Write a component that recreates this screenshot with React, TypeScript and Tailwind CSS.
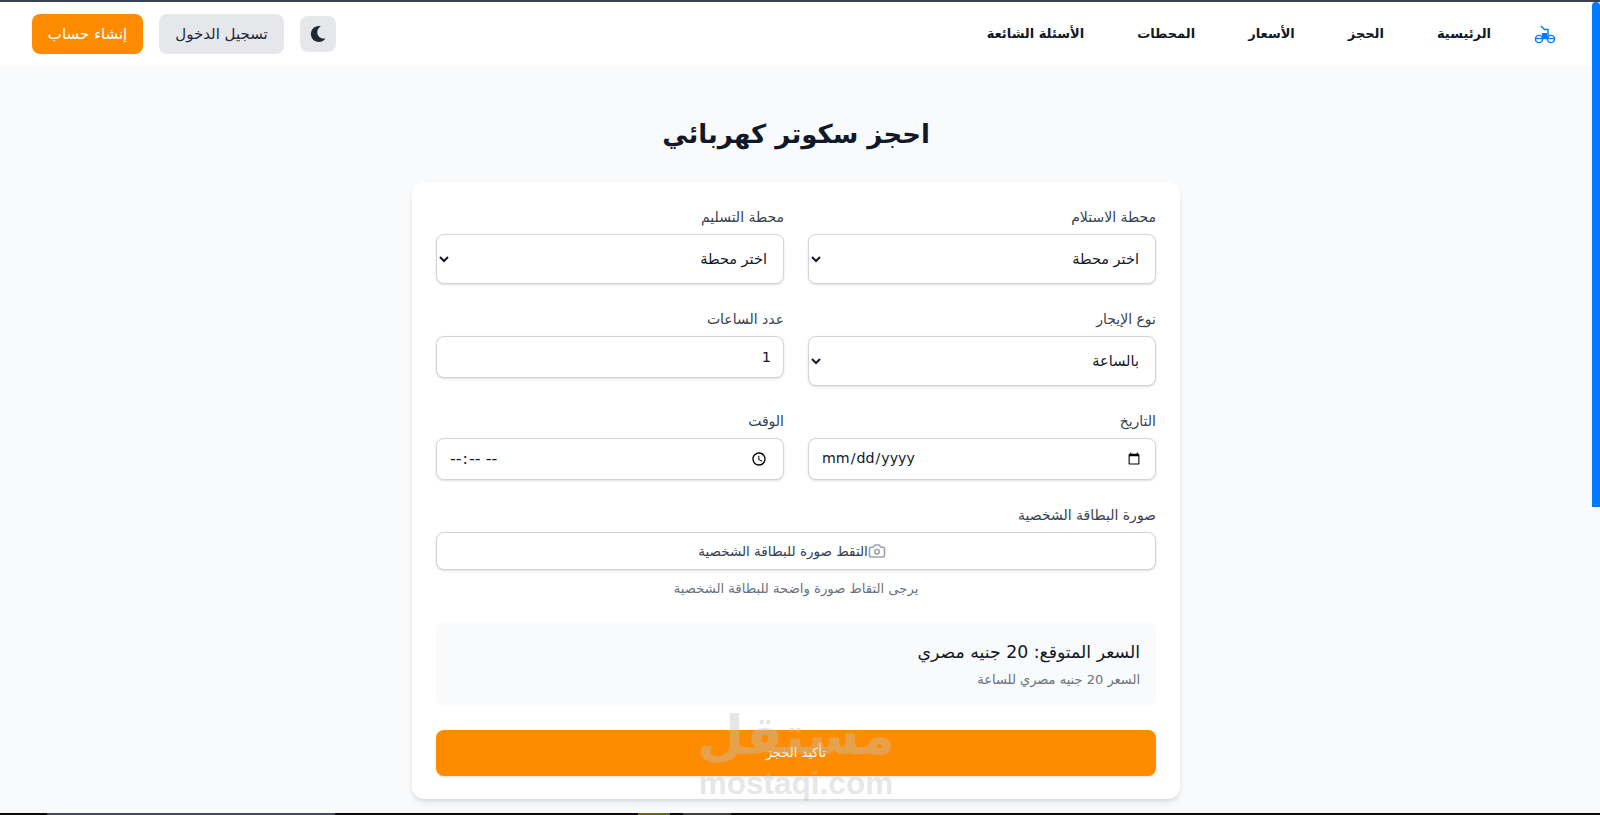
import { Camera } from "lucide-react";
import { FaMoon } from "react-icons/fa";

const field = "w-full rounded-lg border border-[#d1d5db] bg-white shadow-sm text-[#111827]";

function Logo() {
  return (
    <svg width="22" height="19" viewBox="0 0 22 19" fill="none" stroke="#007bff" strokeWidth="1.4">
      <circle cx="5" cy="14" r="3.6" />
      <circle cx="17" cy="14" r="3.6" />
      <path d="M1.5 13.5h19" />
      <path d="M7 1l3.5 3.5h3.5v8" />
      <rect x="8" y="8" width="5" height="5" fill="#007bff" stroke="none" />
    </svg>
  );
}

function Label({ children }: { children: string }) {
  return <label className="block mt-px text-[14px] leading-5 text-[#374151] mb-[7px]">{children}</label>;
}

function StationSelect({ text }: { text: string }) {
  return (
    <select className={`${field} h-[50px] px-3 text-[14.5px]`}>
      <option>{text}</option>
    </select>
  );
}

export default function App() {
  return (
    <div dir="rtl" className="relative h-screen overflow-hidden flex flex-col bg-[#f9fafb] font-['DejaVu_Sans',sans-serif] text-[#111827]">
      <div className="h-[2px] shrink-0 bg-[#374151]" />
      <header className="h-16 shrink-0 bg-white flex items-center justify-between pr-[36px] pl-8 mr-2">
        <div className="flex items-center gap-[43px]">
          <Logo />
          <nav className="flex items-center gap-[53px] text-[13px] font-bold text-[#111827]">
            <a>الرئيسية</a>
            <a>الحجز</a>
            <a>الأسعار</a>
            <a>المحطات</a>
            <a>الأسئلة الشائعة</a>
          </nav>
        </div>
        <div className="flex items-center gap-4">
          <button className="w-9 h-9 rounded-lg bg-[#e5e7eb] flex items-center justify-center text-[#1f2937]">
            <FaMoon size={16} />
          </button>
          <button className="h-10 w-[125px] rounded-lg bg-[#e5e7eb] text-[15px] text-[#1f2937]">تسجيل الدخول</button>
          <button className="h-10 w-[111px] rounded-lg bg-[#ff8c00] text-[15px] text-white">إنشاء حساب</button>
        </div>
      </header>

      <main className="flex-1 min-h-0 flex flex-col items-center mr-2">
        <h1 className="mt-[48px] mb-[28px] text-[26px] leading-10 font-bold text-[#111827]">احجز سكوتر كهربائي</h1>
        <div className="w-[768px] h-[617px] shrink-0 rounded-xl bg-white shadow-md p-6">
          <div className="grid grid-cols-2 gap-x-6">
            <div className="h-[102px]">
              <Label>محطة الاستلام</Label>
              <StationSelect text="اختر محطة" />
            </div>
            <div className="h-[102px]">
              <Label>محطة التسليم</Label>
              <StationSelect text="اختر محطة" />
            </div>
            <div className="h-[102px]">
              <Label>نوع الإيجار</Label>
              <StationSelect text="بالساعة" />
            </div>
            <div className="h-[102px]">
              <Label>عدد الساعات</Label>
              <input type="number" defaultValue={1} className={`${field} h-[42px] px-3 text-right text-[14.5px]`} />
            </div>
            <div className="h-[94px]">
              <Label>التاريخ</Label>
              <input type="date" dir="ltr" className={`${field} h-[42px] px-3 text-[14.2px]`} />
            </div>
            <div className="h-[94px]">
              <Label>الوقت</Label>
              <input type="time" dir="ltr" className={`${field} h-[42px] px-3 text-[16px] tracking-[0.8px]`} />
            </div>
          </div>
          <Label>صورة البطاقة الشخصية</Label>
          <button className={`${field} h-[38px] pr-2 flex items-center justify-center text-[13.5px] text-[#374151]`}>
            <Camera size={18} strokeWidth={2.2} className="text-[#9ca3af]" />
            <span>التقط صورة للبطاقة الشخصية</span>
          </button>
          <p className="mt-[9px] text-center text-[13.2px] leading-5 text-[#6b7280]">يرجى التقاط صورة واضحة للبطاقة الشخصية</p>
          <div className="mt-[23px] h-[84px] rounded-lg bg-[#f9fafb] p-4">
            <p className="text-[17.3px] leading-7 text-[#111827]">السعر المتوقع: 20 جنيه مصري</p>
            <p className="mt-1 text-[13px] leading-5 text-[#6b7280]">السعر 20 جنيه مصري للساعة</p>
          </div>
          <button className="mt-6 w-full h-[46px] rounded-lg bg-[#ff8c00] text-[13px] text-white shadow-sm">تأكيد الحجز</button>
        </div>
      </main>

      <div dir="ltr" className="h-[2px] shrink-0 flex bg-[#0a0a0a]">
        <div className="ml-[47px] w-[288px] bg-[#4b4a5c]" />
        <div className="ml-[303px] w-[32px] bg-[#6b6420]" />
        <div className="ml-[13px] w-[48px] bg-[#3f3f3f]" />
      </div>

      <div className="absolute top-[2px] right-0 w-2 h-[505px] rounded-t-full bg-[#007bff]" />

      <div dir="ltr" className="absolute left-[604px] top-[707px] w-[384px] flex flex-col items-center pointer-events-none text-[#c0c0c0]/40 font-bold">
        <span dir="rtl" className="text-[54px] leading-[58px]">مستقل</span>
        <span className="font-['Liberation_Sans',sans-serif] text-[31.5px] leading-9">mostaqi.com</span>
      </div>
    </div>
  );
}
